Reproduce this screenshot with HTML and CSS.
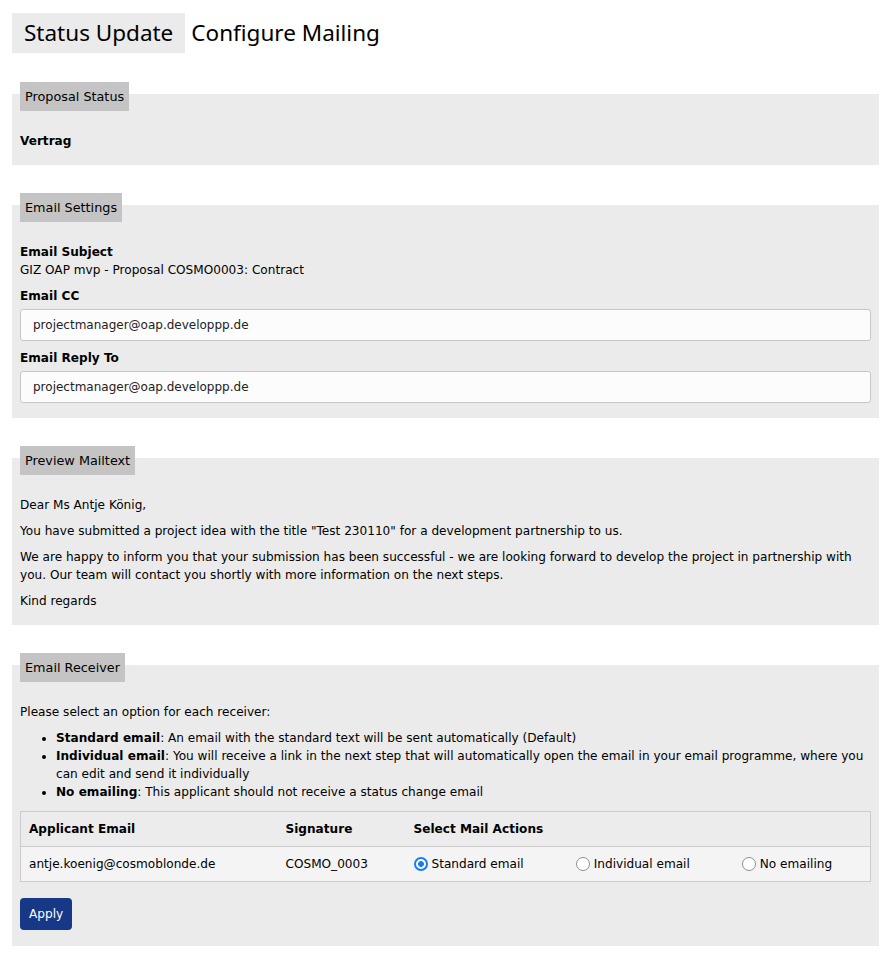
FILE: index.html
```html
<!DOCTYPE html>
<html>
<head>
<meta charset="utf-8">
<link rel="stylesheet" href="styles.css">
</head>
<body>
<div class="page">
  <h1 class="title">
    <span class="title-tab">Status Update</span>
    <span class="title-rest">Configure Mailing</span>
  </h1>

  <section class="panel">
    <div class="legend">Proposal Status</div>
    <div class="content">
      <div class="label">Vertrag</div>
    </div>
  </section>

  <section class="panel">
    <div class="legend">Email Settings</div>
    <div class="content">
      <div class="field">
        <div class="label">Email Subject</div>
        <div class="value">GIZ OAP mvp - Proposal COSMO0003: Contract</div>
      </div>
      <div class="field">
        <div class="label">Email CC</div>
        <input class="input" type="text" value="projectmanager@oap.developpp.de">
      </div>
      <div class="field">
        <div class="label">Email Reply To</div>
        <input class="input" type="text" value="projectmanager@oap.developpp.de">
      </div>
    </div>
  </section>

  <section class="panel">
    <div class="legend">Preview Mailtext</div>
    <div class="content mailtext">
      <p>Dear Ms Antje König,</p>
      <p>You have submitted a project idea with the title "Test 230110" for a development partnership to us.</p>
      <p>We are happy to inform you that your submission has been successful - we are looking forward to develop the project in partnership with you. Our team will contact you shortly with more information on the next steps.</p>
      <p>Kind regards</p>
    </div>
  </section>

  <section class="panel panel-last">
    <div class="legend">Email Receiver</div>
    <div class="content">
      <p class="intro">Please select an option for each receiver:</p>
      <ul class="options">
        <li><b>Standard email</b>: An email with the standard text will be sent automatically (Default)</li>
        <li><b>Individual email</b>: You will receive a link in the next step that will automatically open the email in your email programme, where you can edit and send it individually</li>
        <li><b>No emailing</b>: This applicant should not receive a status change email</li>
      </ul>
      <table class="receivers">
        <thead>
          <tr>
            <th class="col-email">Applicant Email</th>
            <th class="col-sig">Signature</th>
            <th>Select Mail Actions</th>
          </tr>
        </thead>
        <tbody>
          <tr>
            <td>antje.koenig@cosmoblonde.de</td>
            <td>COSMO_0003</td>
            <td>
              <div class="radios">
                <label class="radio"><input type="radio" name="a1" checked> Standard email</label>
                <label class="radio"><input type="radio" name="a1"> Individual email</label>
                <label class="radio"><input type="radio" name="a1"> No emailing</label>
              </div>
            </td>
          </tr>
        </tbody>
      </table>
      <button class="apply" type="button">Apply</button>
    </div>
  </section>
</div>
</body>
</html>
```

FILE: styles.css
```css
* { box-sizing: border-box; }

body {
  margin: 0;
  background: #ffffff;
  color: #000000;
  font-family: "DejaVu Sans", Verdana, sans-serif;
  font-size: 12.1px;
  line-height: 18px;
}

.page {
  padding: 13px 13px 12px 12px;
}

.title {
  display: flex;
  align-items: center;
  margin: 0;
  font-family: "Noto Sans", "Open Sans", sans-serif;
  font-weight: 400;
  font-size: 22.5px;
  line-height: 40px;
}

.title-tab {
  background: #ebebeb;
  padding: 0 12px;
}

.title-rest {
  margin-left: 6px;
}

.panel {
  background: #ebebeb;
  margin-top: 40px;
  padding: 0 8px 15px;
}

.panel:first-of-type {
  margin-top: 41px;
}

.panel-last {
  padding-bottom: 16px;
}

.legend {
  display: block;
  width: fit-content;
  background: #c4c4c4;
  position: relative;
  top: -12px;
  margin-bottom: -12px;
  padding: 0 5px;
  line-height: 29px;
  height: 29px;
  font-size: 12.8px;
}

.content {
  padding-top: 21px;
}

.label {
  font-weight: bold;
}

.field + .field {
  margin-top: 8px;
}

.field .label {
  margin-bottom: 4px;
}

.field .value {
  margin-top: -4px;
}

.input {
  display: block;
  width: 100%;
  height: 32px;
  padding: 0 12px;
  border: 1px solid #c6c6c6;
  border-radius: 3px;
  background: #fcfcfc;
  font-family: "DejaVu Sans", Verdana, sans-serif;
  font-size: 12px;
  color: #222;
}

.mailtext p {
  margin: 0 0 8px;
}

.mailtext p:last-child {
  margin-bottom: 0;
}

.intro {
  margin: 0 0 8px;
}

.options {
  margin: 0;
  padding-left: 36px;
}

.receivers {
  margin-top: 10px;
  width: 100%;
  border-collapse: collapse;
  border: 1px solid #cccccc;
}

.receivers th,
.receivers td {
  text-align: left;
  padding: 0 8px;
  height: 35px;
}

.receivers th {
  background: #ececec;
  border-bottom: 1px solid #cccccc;
}

.receivers td {
  background: #f4f4f4;
}

.col-email { width: 257px; }
.col-sig { width: 128px; }

.radios {
  display: flex;
  gap: 52px;
}

.radio {
  display: inline-flex;
  align-items: center;
  gap: 4px;
}

.radio input {
  appearance: none;
  -webkit-appearance: none;
  margin: 0;
  width: 14px;
  height: 14px;
  border-radius: 50%;
  border: 1.5px solid #8e8e93;
  background: #ffffff;
}

.radio input:checked {
  border: 2px solid #1a7cf5;
  background: radial-gradient(circle, #1a7cf5 0 2.6px, #ffffff 3.2px);
}

.apply {
  display: block;
  margin-top: 16px;
  height: 32px;
  padding: 0 9px;
  border: none;
  border-radius: 4px;
  background: #163887;
  color: #ffffff;
  font-family: "DejaVu Sans", Verdana, sans-serif;
  font-size: 12.1px;
}
```
